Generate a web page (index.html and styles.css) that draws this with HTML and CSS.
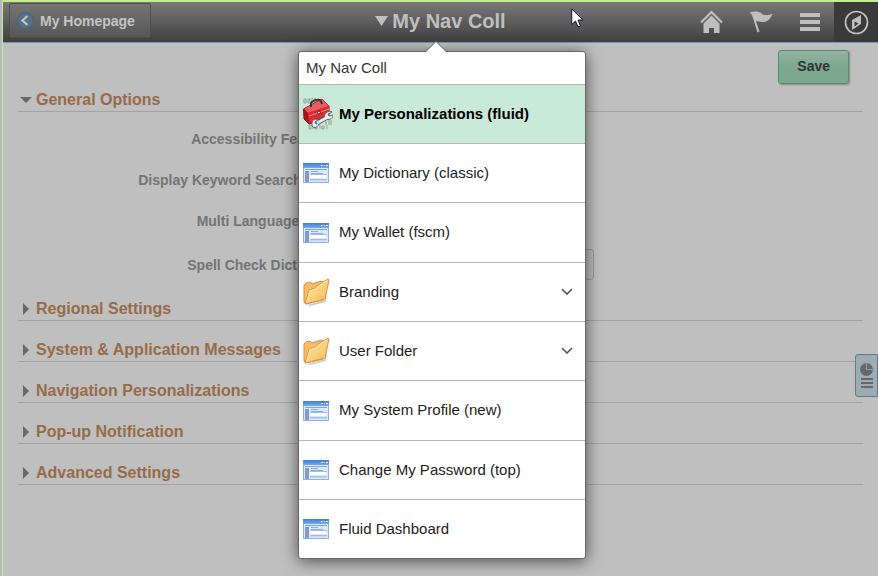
FILE: index.html
```html
<!DOCTYPE html>
<html lang="en">
<head>
  <meta charset="UTF-8">
  <title>General Options</title>
  <link rel="stylesheet" href="styles.css">
</head>
<body>
  <!-- shared icons -->
  <svg class="sprite" aria-hidden="true">
    <defs>
      <linearGradient id="bar" x1="0" y1="0" x2="0" y2="1">
        <stop offset="0" stop-color="#3f7fd0"/>
        <stop offset="1" stop-color="#74aaea"/>
      </linearGradient>
      <linearGradient id="gold" x1="0" y1="0" x2="1" y2="1">
        <stop offset="0" stop-color="#ffe5a4"/>
        <stop offset="1" stop-color="#f9bd58"/>
      </linearGradient>
    </defs>
    <symbol id="page" viewBox="0 0 26 20">
      <rect x="0.5" y="0.5" width="25" height="19" fill="#dce8fa" stroke="#88b2ea"/>
      <rect width="26" height="5" fill="url(#bar)"/>
      <path d="M18 2h2v1h-2zM21 2h1v1h-1zM23 2h2v1h-2z" fill="#fff"/>
      <path d="M2 6h22v1H2z" fill="#7ca8e2"/>
      <path d="M2 8h4v11H2z" fill="#849bd0"/>
      <path d="M8 8h7v1H8zM8 10h12v1H8z" fill="#86abe0"/>
      <path d="M7 12h16v3H7z" fill="#fff"/>
      <path d="M7 11h17v1H7zM7 16h17v1H7z" fill="#a3bde8"/>
      <path d="M7 17h17v1H7z" fill="#c5d7f2"/>
    </symbol>
    <symbol id="folder" viewBox="0 0 27 28">
      <path d="M4 27l18-5 2-8-1 10-16 4z" fill="#999" opacity=".5"/>
      <path d="M1 24V7l2-2 4-1 2 2 9-3 2 1v18L3 26z" fill="#f6bd6c" stroke="#e0913a"/>
      <path d="M2 26L6 12l6-2 3-3 10-6 1 1-4 19z" fill="url(#gold)" stroke="#e0913a" stroke-linejoin="round"/>
      <path d="M4 24L7 13l6-2 3-3 8-5" fill="none" stroke="#fff0c4"/>
    </symbol>
    <symbol id="chevron" viewBox="0 0 12 7">
      <path d="M1 1l5 5 5-5" fill="none" stroke="#555" stroke-width="1.6"/>
    </symbol>
    <symbol id="closed" viewBox="0 0 17 14">
      <path d="M5 1l6 6-6 6z" fill="#686868"/>
    </symbol>
  </svg>

  <header class="banner">
    <div class="banner-left">
      <button type="button" class="back">
        <svg width="17" height="17" viewBox="0 0 17 17" aria-hidden="true">
          <circle cx="8.5" cy="8.5" r="8" fill="#547187" stroke="#46627a"/>
          <path d="M10.5 4l-5 4.5 5 4.5" fill="none" stroke="#c4c4c4" stroke-width="2.2"/>
        </svg>
        My Homepage
      </button>
    </div>
    <h1 class="banner-title">
      <button type="button" class="title-button" aria-expanded="true">
        <svg width="13" height="10" viewBox="0 0 13 10" aria-hidden="true"><path d="M0 0h13L6.5 10z" fill="#bfbfbf"/></svg>
        My Nav Coll
      </button>
    </h1>
    <div class="banner-actions">
      <button type="button" class="action" aria-label="Home">
        <svg width="23" height="24" viewBox="0 0 23 24"><path d="M1 12.500L11.500 2 22 12.500" fill="none" stroke="#bfbfbf" stroke-width="2.200"/><path d="M3.500 13.500L11.500 5.500l8 8V23H14v-5H9v5H3.500z" fill="#bfbfbf"/></svg>
      </button>
      <button type="button" class="action" aria-label="Actions">
        <svg width="24" height="22" viewBox="0 0 24 22"><path d="M.5 1.500C5 0 10 0 12.500 2.500 15.500 5.500 20 3.500 23.500 3 22 6.500 19 11 14.500 11 11.500 11 9 9.500 7 10.500L10.500 20.500 8.500 21.500 3 4z" fill="#bfbfbf"/></svg>
      </button>
      <button type="button" class="action" aria-label="Menu">
        <svg width="20" height="18" viewBox="0 0 20 18"><path d="M0 0h20v4H0zM0 7h20v4H0zM0 14h20v4H0z" fill="#bfbfbf"/></svg>
      </button>
      <button type="button" class="action navbar" aria-label="NavBar">
        <svg width="25" height="25" viewBox="0 0 25 25"><circle cx="12.500" cy="12.500" r="11" fill="none" stroke="#bfbfbf" stroke-width="1.700"/><path d="M17 5v9l-9 6V10z" fill="#bfbfbf"/><path d="M10.500 11.500l4 2-4 3z" fill="#3a3a3a"/></svg>
      </button>
    </div>
  </header>

  <main class="content">
    <div class="toolbar">
      <button type="button" class="save">Save</button>
    </div>

    <h2 class="section first">
      <button type="button" class="section-toggle" aria-expanded="true">
        <svg width="17" height="14" viewBox="0 0 17 14" aria-hidden="true"><path d="M2 4h12L8 10z" fill="#686868"/></svg>General Options
      </button>
    </h2>
    <form class="options">
      <div class="row">
        <label for="access">Accessibility Features</label>
        <select id="access" class="short"></select>
      </div>
      <div class="row">
        <label for="keyword">Display Keyword Search Page</label>
        <input type="checkbox" id="keyword">
      </div>
      <div class="row">
        <label for="multi">Multi Language Entry</label>
        <input type="checkbox" id="multi">
      </div>
      <div class="row last">
        <label for="spell">Spell Check Dictionary</label>
        <select id="spell"></select>
      </div>
    </form>

    <h2 class="section"><button type="button" class="section-toggle"><svg width="17" height="14" aria-hidden="true"><use href="#closed"/></svg>Regional Settings</button></h2>
    <h2 class="section"><button type="button" class="section-toggle"><svg width="17" height="14" aria-hidden="true"><use href="#closed"/></svg>System &amp; Application Messages</button></h2>
    <h2 class="section"><button type="button" class="section-toggle"><svg width="17" height="14" aria-hidden="true"><use href="#closed"/></svg>Navigation Personalizations</button></h2>
    <h2 class="section"><button type="button" class="section-toggle"><svg width="17" height="14" aria-hidden="true"><use href="#closed"/></svg>Pop-up Notification</button></h2>
    <h2 class="section"><button type="button" class="section-toggle"><svg width="17" height="14" aria-hidden="true"><use href="#closed"/></svg>Advanced Settings</button></h2>
  </main>

  <button type="button" class="side-tab" aria-label="Related information">
    <svg width="13" height="25" viewBox="0 0 13 25"><circle cx="6.500" cy="6.500" r="6.500" fill="#686868"/><path d="M6.500 6.500V0M6.500 6.500H13" stroke="#93a1aa"/><path d="M1 15h12v2H1zM1 19h12v2H1zM1 23h12v2H1z" fill="#686868"/></svg>
  </button>

  <nav class="collection" aria-label="My Nav Coll">
    <svg class="pointer" width="22" height="12" viewBox="0 0 22 12" aria-hidden="true"><path d="M0 11.500L11 .5l11 11" fill="#fff" stroke="#666"/><path d="M1 12L11 2l10 10z" fill="#fff"/></svg>
    <h2 class="collection-title">My Nav Coll</h2>
    <ul class="collection-list">
      <li>
        <a href="#" class="item current">
          <svg width="30" height="32" viewBox="0 0 30 32" aria-hidden="true">
            <g fill="none" stroke="#8d9f96">
              <path d="M1 1h2v4H1zM5 1h2v4H5zM9 0v5M11 1h2v4h-2zM16 1v3M23 23v4M26 22v5M28 22v5"/>
              <path d="M6 27h2v4H6zM10 27v4M12 28h2v3h-2zM17 27v4M19 28h2v3h-2zM24 27v4"/>
            </g>
            <path d="M0.500 11L19 1l7 7v11L6 26l-5-5z" fill="#c91f23" stroke="#851316"/>
            <path d="M1 11L19 1l7 7L5 15z" fill="#ee5a60"/>
            <path d="M1 11l4 4 1 10-5-4z" fill="#a51418"/>
            <path d="M5 15l21-7v11L6 25z" fill="#dc2b30"/>
            <path d="M6 18l20-7" stroke="#f68588"/>
            <path d="M8 9V6c0-3 8-6 10-3l1 3" fill="none" stroke="#303a3a" stroke-width="2"/>
            <circle cx="16" cy="14.500" r="1.500" fill="#ddd" stroke="#711"/>
            <path d="M12 26L26 18" stroke="#555" stroke-width="5"/>
            <path d="M9 25c0-3 3-5 6-3l-3 2 1 2 3-1c0 4-5 6-7 3zM23 15c2-2 5-2 6-1l-4 2 1 2 4-1c0 4-5 6-7 3-2-1-2-3 0-5z" fill="#e9eeee" stroke="#666"/>
            <path d="M14 25L25 19" stroke="#e9eeee" stroke-width="3"/>
          </svg>
          My Personalizations (fluid)
        </a>
      </li>
      <li><a href="#" class="item"><svg width="26" height="20" aria-hidden="true"><use href="#page"/></svg>My Dictionary (classic)</a></li>
      <li><a href="#" class="item"><svg width="26" height="20" aria-hidden="true"><use href="#page"/></svg>My Wallet (fscm)</a></li>
      <li>
        <button type="button" class="item" aria-expanded="false"><svg width="27" height="28" aria-hidden="true"><use href="#folder"/></svg>Branding<svg width="12" height="7" aria-hidden="true"><use href="#chevron"/></svg></button>
      </li>
      <li>
        <button type="button" class="item" aria-expanded="false"><svg width="27" height="28" aria-hidden="true"><use href="#folder"/></svg>User Folder<svg width="12" height="7" aria-hidden="true"><use href="#chevron"/></svg></button>
      </li>
      <li><a href="#" class="item"><svg width="26" height="20" aria-hidden="true"><use href="#page"/></svg>My System Profile (new)</a></li>
      <li><a href="#" class="item"><svg width="26" height="20" aria-hidden="true"><use href="#page"/></svg>Change My Password (top)</a></li>
      <li><a href="#" class="item"><svg width="26" height="20" aria-hidden="true"><use href="#page"/></svg>Fluid Dashboard</a></li>
    </ul>
  </nav>

  <svg class="cursor" width="13" height="20" viewBox="0 0 13 20" aria-hidden="true"><path d="M.7 1v15.500L4.500 13l2.500 6 2.500-1-2.500-6h5z" fill="#fff" stroke="#16162a"/></svg>
</body>
</html>
```
FILE: styles.css
```css
* {
  box-sizing: border-box;
}

body {
  margin: 0;
  min-height: 100vh;
  position: relative;
  border-top: 2px solid #cdf095;
  border-left: 3px solid #a9ba92;
  border-image: linear-gradient(to right, #b9b9b9 2px, #c5ee8a 2px) 2 0 0 3;
  background: #bfbfbf;
  font-family: "Liberation Sans", Arial, sans-serif;
  font-size: 15px;
  color: #333;
}

button {
  font-family: inherit;
  cursor: pointer;
}

svg {
  flex-shrink: 0;
}

.sprite {
  position: absolute;
  width: 0;
  height: 0;
}

/* banner */
.banner {
  display: grid;
  grid-template-columns: 1fr auto 1fr;
  height: 41px;
  background: linear-gradient(#797979, #3f3f3f);
  border-bottom: 1px solid #7d92b3;
}

.banner-left {
  padding: 1px 6px;
}

.back {
  display: flex;
  align-items: center;
  gap: 6px;
  height: 35px;
  padding: 0 15px 0 7px;
  border: 1px solid #505050;
  border-radius: 2px;
  background: linear-gradient(#747474, #575757);
  color: #c4c4c4;
  font-size: 14px;
  font-weight: bold;
}

.banner-title {
  margin: 0;
}

.title-button {
  display: flex;
  align-items: center;
  gap: 4px;
  height: 38px;
  padding: 0;
  border: 0;
  background: none;
  color: #bfbfbf;
  font-size: 20px;
  font-weight: bold;
}

.banner-actions {
  display: flex;
  justify-content: flex-end;
}

.action {
  display: flex;
  align-items: center;
  justify-content: center;
  width: 49px;
  padding: 0;
  border: 0;
  background: none;
}

.navbar {
  width: 44px;
  background: #3a3a3a;
}

/* page */
.content {
  padding: 0 15px;
}

.toolbar {
  display: flex;
  justify-content: flex-end;
  padding: 7px 14px 0;
}

.save {
  height: 34px;
  padding: 0 18px 2px;
  border: 1px solid #51906f;
  border-radius: 3px;
  background: linear-gradient(#94b3a3, #7ba88e 50%);
  box-shadow: 1px 1px 2px #888;
  color: #333;
  font-size: 14px;
  font-weight: bold;
}

.section {
  margin: 0;
  padding-top: 18px;
  border-bottom: 1px solid #a3a3a3;
}

.section.first {
  padding-top: 5px;
}

.section-toggle {
  display: flex;
  align-items: center;
  gap: 1px;
  width: 100%;
  height: 22px;
  padding: 0;
  border: 0;
  background: none;
  color: #976b49;
  font-size: 16px;
  font-weight: bold;
}

.options {
  padding-top: 6px;
}

.row {
  display: flex;
  align-items: center;
  gap: 16px;
  height: 41px;
}

.row.last {
  height: auto;
  padding-top: 8px;
}

.row label {
  width: 321px;
  text-align: right;
  font-size: 14px;
  font-weight: bold;
  color: #747474;
}

.row input {
  margin: 0;
}

.row select {
  width: 239px;
  height: 31px;
  border: 1px solid #9b9b9b;
  border-radius: 3px;
  background: #bcbcbc;
  appearance: none;
}

.row select.short {
  width: 150px;
}

.side-tab {
  position: absolute;
  top: 352px;
  right: 0;
  display: flex;
  align-items: center;
  justify-content: center;
  width: 23px;
  height: 43px;
  padding: 0;
  border: 1px solid #66798a;
  border-radius: 3px 0 0 3px;
  background: #9dabb4;
}

/* navigation collection menu */
.collection {
  position: absolute;
  top: 49px;
  left: 295px;
  width: 288px;
  border: 1px solid #666;
  border-radius: 3px;
  background: #fff;
  box-shadow: 0 2px 16px rgba(0, 0, 0, 0.6);
}

.pointer {
  position: absolute;
  top: -11px;
  left: 126px;
}

.collection-title {
  margin: 0;
  padding: 0 7px;
  border-bottom: 1px solid #b5b5b5;
  font-size: 15px;
  font-weight: normal;
  line-height: 32px;
}

.collection-list {
  margin: 0;
  padding: 0;
  list-style: none;
}

.collection-list li {
  height: 59px;
  border-bottom: 1px solid #b5b5b5;
}

.collection-list li:nth-child(3n) {
  height: 60px;
}

.collection-list li:last-child {
  height: 58px;
  border-bottom: 0;
}

.item {
  display: grid;
  grid-template-columns: 36px 1fr auto;
  align-items: center;
  width: 100%;
  height: 100%;
  padding: 0 12px 2px 4px;
  border: 0;
  background: none;
  color: #222;
  font-size: 15px;
  text-align: left;
  text-decoration: none;
}

.item svg:first-child {
  margin-top: 2px;
}

.item.current {
  background: #c9ead8;
  color: #000;
  font-weight: bold;
}

.cursor {
  position: absolute;
  top: 6px;
  left: 568px;
  pointer-events: none;
}
```
